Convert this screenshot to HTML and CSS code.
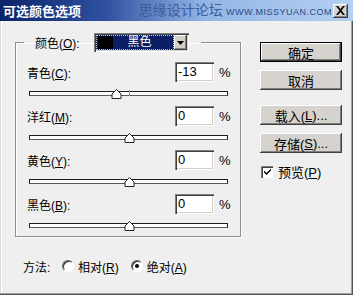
FILE: index.html
```html
<!DOCTYPE html>
<html>

<head>
    <meta charset="utf-8" />
    <title>可选颜色选项</title>
    <link rel="stylesheet" href="styles.css">
</head>

<body>
    <div class="dialog">
        <!-- 标题栏 -->
        <div class="titlebar">
            <span class="title">可选颜色选项</span>
            <span class="watermark">思缘设计论坛 <small>WWW.MISSYUAN.COM</small></span>
            <span class="close">
                <svg width="11" height="9" viewBox="0 0 11 9"><path d="M1 0h2l2.5 3 2.5-3h2l-3.5 4.5 3.5 4.5h-2l-2.5-3-2.5 3h-2l3.5-4.5z" fill="#000"/></svg>
            </span>
        </div>

        <div class="body">
            <div class="main">
                <fieldset class="group">
                    <legend>
                        <span class="label">颜色(<u>O</u>):</span>
                        <span class="select">
                            <span class="selected"><span class="swatch"></span><span class="value">黑色</span></span>
                            <span class="arrow"><svg width="7" height="4" viewBox="0 0 7 4"><path d="M0 0h7l-3.5 4z" fill="#000"/></svg></span>
                        </span>
                    </legend>

                    <div class="channel">
                        <div class="line"><span class="label">青色(<u>C</u>):</span><span class="field">-13</span><span class="pct">%</span></div>
                        <div class="slider"><span class="track"></span><span class="mark"></span>
                            <svg class="thumb" style="left: calc(43.5% - 5px)" width="11" height="10" viewBox="0 0 11 10"><path d="M5.5 0.5l4.5 4.5v4.5h-9v-4.5z" fill="#fff" stroke="#222"/></svg>
                        </div>
                    </div>
                    <div class="channel">
                        <div class="line"><span class="label">洋红(<u>M</u>):</span><span class="field">0</span><span class="pct">%</span></div>
                        <div class="slider"><span class="track"></span><span class="mark"></span>
                            <svg class="thumb" style="left: calc(50% - 5px)" width="11" height="10" viewBox="0 0 11 10"><path d="M5.5 0.5l4.5 4.5v4.5h-9v-4.5z" fill="#fff" stroke="#222"/></svg>
                        </div>
                    </div>
                    <div class="channel">
                        <div class="line"><span class="label">黄色(<u>Y</u>):</span><span class="field">0</span><span class="pct">%</span></div>
                        <div class="slider"><span class="track"></span><span class="mark"></span>
                            <svg class="thumb" style="left: calc(50% - 5px)" width="11" height="10" viewBox="0 0 11 10"><path d="M5.5 0.5l4.5 4.5v4.5h-9v-4.5z" fill="#fff" stroke="#222"/></svg>
                        </div>
                    </div>
                    <div class="channel">
                        <div class="line"><span class="label">黑色(<u>B</u>):</span><span class="field">0</span><span class="pct">%</span></div>
                        <div class="slider"><span class="track"></span><span class="mark"></span>
                            <svg class="thumb" style="left: calc(50% - 5px)" width="11" height="10" viewBox="0 0 11 10"><path d="M5.5 0.5l4.5 4.5v4.5h-9v-4.5z" fill="#fff" stroke="#222"/></svg>
                        </div>
                    </div>
                </fieldset>

                <!-- 方法 -->
                <div class="method">
                    <span class="method-label">方法:</span>
                    <span class="radio"></span><span class="opt">相对(<u>R</u>)</span>
                    <span class="radio checked"></span><span class="opt">绝对(<u>A</u>)</span>
                </div>
            </div>

            <div class="side">
                <div class="btn default">确定</div>
                <div class="btn">取消</div>
                <div class="btn gap">载入(<u>L</u>)...</div>
                <div class="btn">存储(<u>S</u>)...</div>
                <div class="check">
                    <span class="box"><svg width="7" height="7" viewBox="0 0 7 7"><path d="M0 2.5l2.5 2.5 4.5-4.5v2l-4.5 4.5-2.5-2.5z" fill="#000"/></svg></span>
                    <span>预览(<u>P</u>)</span>
                </div>
            </div>
        </div>
    </div>
</body>

</html>
```

FILE: styles.css
```css
body {
    margin: 0;
    background: #efefef;
}

.dialog {
    width: 353px;
    height: 295px;
    background: #efefef;
    font-family: "Liberation Sans", "Noto Sans CJK SC", sans-serif;
    font-size: 12px;
    color: #000;
    box-sizing: border-box;
    box-shadow: inset -1px -1px 0 #555, inset -2px -2px 0 #a0a0a0, inset 1px 0 0 #dcdcdc, inset 2px 0 0 #fff;
}

u {
    text-decoration: underline;
    text-underline-offset: 1px;
}

/* 标题栏 */
.titlebar {
    height: 21px;
    display: flex;
    align-items: center;
    padding: 0 5px 0 3px;
    background: linear-gradient(to right, #0a246a, #2f51a0 30%, #93b6e6 58%, #b4d0f2);
}

.titlebar .title {
    color: #fff;
    font-family: "Noto Sans CJK SC", sans-serif;
    font-weight: 700;
    font-size: 13px;
    line-height: 20px;
}

.titlebar .watermark {
    margin-left: auto;
    color: #3d5c9c;
    font-family: "Noto Sans CJK SC", sans-serif;
    font-size: 14px;
    line-height: 20px;
    white-space: nowrap;
}

.titlebar .watermark small {
    font-family: "Liberation Sans", sans-serif;
    font-size: 9px;
    color: #2a4a84;
    letter-spacing: 0.5px;
}

.titlebar .close {
    width: 15px;
    height: 14px;
    margin-left: 1px;
    display: flex;
    align-items: center;
    justify-content: center;
    background: #d6d3ce;
    box-shadow: inset -1px -1px 0 #404040, inset 1px 1px 0 #fff, inset -2px -2px 0 #808080;
}

/* 主体 */
.body {
    display: flex;
    padding: 12px 0 0 15px;
}

.main {
    width: 226px;
}

.group {
    margin: 0;
    padding: 10px 12px 4px 11px;
    border: 1px solid #8e8e8e;
    box-shadow: 1px 1px 0 #fff, inset 1px 1px 0 #fff;
    min-width: 0;
}

.group legend {
    display: flex;
    align-items: center;
    margin-left: -3px;
    padding: 0 12px 0 11px;
    height: 19px;
}

.group legend .label {
    width: 59px;
}

.select {
    width: 95px;
    height: 19px;
    display: flex;
    box-sizing: border-box;
    padding: 2px;
    background: #fff;
    box-shadow: inset 1px 1px 0 #808080, inset 2px 2px 0 #404040, inset -1px -1px 0 #fff, inset -2px -2px 0 #d4d0c8;
}

.select .selected {
    flex: 1;
    display: flex;
    align-items: center;
    background: #0a1f64;
    outline: 1px dotted #c8c8c8;
    outline-offset: -1px;
}

.select .swatch {
    width: 15px;
    height: 13px;
    margin-left: 2px;
    background: #000;
}

.select .value {
    flex: 1;
    text-align: center;
    color: #fff;
    padding-right: 8px;
    line-height: 15px;
}

.select .arrow {
    width: 13px;
    display: flex;
    align-items: center;
    justify-content: center;
    background: #d4d0c8;
    box-shadow: inset -1px -1px 0 #404040, inset 1px 1px 0 #fff, inset -2px -2px 0 #808080;
}

.channel + .channel {
    margin-top: 6px;
}

.channel .line {
    display: flex;
    align-items: center;
    height: 20px;
}

.channel .label {
    flex: 1;
}

.field {
    width: 39px;
    height: 20px;
    box-sizing: border-box;
    padding: 2px 0 0 3px;
    line-height: 16px;
    font-size: 13px;
    background: #fff;
    box-shadow: inset 1px 1px 0 #808080, inset 2px 2px 0 #404040, inset -1px -1px 0 #fff, inset -2px -2px 0 #d4d0c8;
}

.pct {
    width: 14px;
    padding-left: 5px;
    box-sizing: border-box;
    font-size: 13px;
}

.slider {
    position: relative;
    height: 13px;
    margin: 5px 0 0 2px;
    display: flex;
    align-items: center;
}

.slider .track {
    flex: 1;
    height: 3px;
    background: #fff;
    border: 1px solid #1c1c1c;
    border-bottom-color: #5a5a5a;
}

.slider .mark {
    position: absolute;
    left: 50%;
    top: 3px;
    width: 1px;
    height: 6px;
    background: #8a8a8a;
}

.slider .thumb {
    position: absolute;
    top: 2px;
}

/* 方法 */
.method {
    display: flex;
    align-items: center;
    height: 18px;
    margin-top: 20px;
    padding-left: 8px;
}

.method-label {
    width: 39px;
}

.radio {
    width: 12px;
    height: 12px;
    box-sizing: border-box;
    border-radius: 50%;
    background: #fff;
    border: 1px solid;
    border-color: #606060 #fff #fff #606060;
    box-shadow: inset 1px 1px 0 #303030;
    display: flex;
    align-items: center;
    justify-content: center;
    margin-right: 4px;
}

.radio.checked::after {
    content: "";
    width: 4px;
    height: 4px;
    border-radius: 50%;
    background: #000;
}

.opt + .radio {
    margin-left: 12px;
}

/* 右侧按钮 */
.side {
    margin-left: 19px;
    padding-top: 9px;
    width: 82px;
    display: flex;
    flex-direction: column;
}

.btn {
    height: 20px;
    box-sizing: border-box;
    display: flex;
    align-items: center;
    justify-content: center;
    background: #d6d3ce;
    font-size: 13px;
    box-shadow: inset -1px -1px 0 #404040, inset 1px 1px 0 #fff, inset -2px -2px 0 #808080;
    margin-bottom: 8px;
}

.btn.default {
    border: 1px solid #000;
    box-shadow: inset -1px -1px 0 #404040, inset 1px 1px 0 #fff, inset -2px -2px 0 #808080;
}

.btn.gap {
    margin-top: 7px;
}

.check {
    display: flex;
    align-items: center;
    margin-top: 1px;
    padding-left: 1px;
    font-size: 13px;
}

.check .box {
    width: 12px;
    height: 12px;
    box-sizing: border-box;
    margin-right: 5px;
    background: #fff;
    display: flex;
    align-items: center;
    justify-content: center;
    box-shadow: inset 1px 1px 0 #808080, inset 2px 2px 0 #404040, inset -1px -1px 0 #fff;
}
```
